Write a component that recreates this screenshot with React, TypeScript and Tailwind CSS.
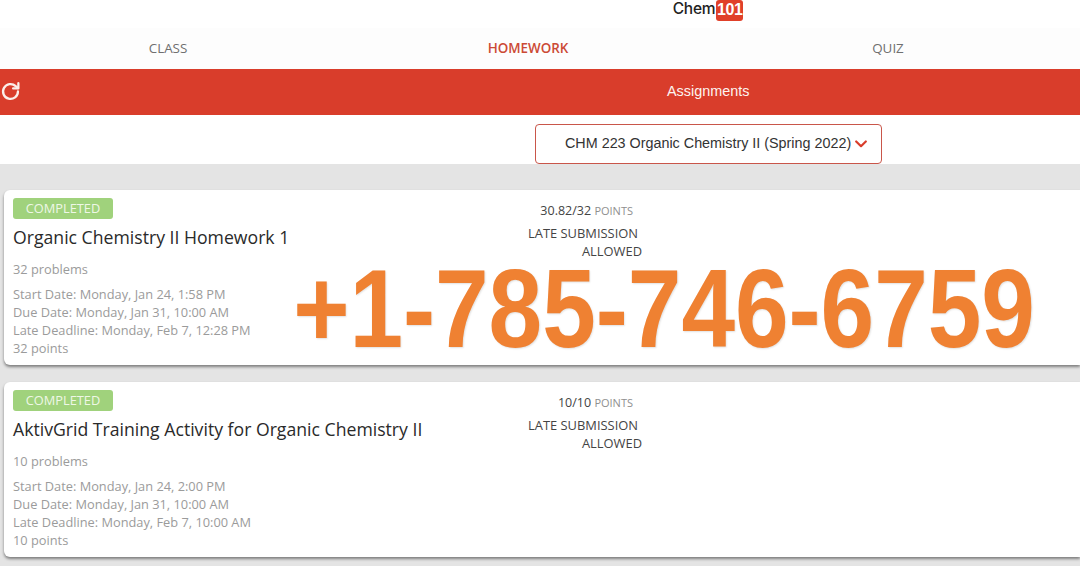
import React from "react";

const sans = "font-['Open_Sans','Noto_Sans',sans-serif]";

function Logo() {
  return (
    <div className="h-[28px] flex justify-center pl-[336px] bg-white">
      <div className="flex items-start h-[21px]">
        <span className="font-['Inter',sans-serif] text-[15.5px] leading-[18px] font-medium tracking-[-0.25px] text-[#222222]">Chem</span>
        <span className="font-['Liberation_Sans',sans-serif] font-bold text-[16px] tracking-[-0.4px] leading-[20px] h-[21px] w-[27px] ml-[1px] text-center rounded-[3px] bg-[#e04029] text-white">101</span>
      </div>
    </div>
  );
}

function Tabs() {
  return (
    <div className={`${sans} h-[41px] bg-[#fdfdfd] text-[13.4px] text-[#6f6f6f]`}>
      <div className="w-[1080px] h-full -ml-[12px] grid grid-cols-3">
        <div className="flex items-center justify-center">CLASS</div>
        <div className="flex items-center justify-center font-semibold text-[#cc4a35]">HOMEWORK</div>
        <div className="flex items-center justify-center">QUIZ</div>
      </div>
    </div>
  );
}

function RedBar() {
  return (
    <div className="h-[46px] bg-[#d93d2b] flex items-center">
      <svg className="mb-[1px] shrink-0" width="21" height="21" viewBox="0 0 24 24" fill="none" stroke="#fbeee9" strokeWidth="2.6" strokeLinecap="round" strokeLinejoin="round">
        <path d="M20.5 12a8.5 8.5 0 1 1-2.6-6.1L20.5 8" />
        <path d="M21 2.5V8.5h-6" />
      </svg>
      <div className="pl-[646px] font-['Liberation_Sans',sans-serif] text-[14.4px] text-[#fdf3f0]">Assignments</div>
    </div>
  );
}

function Selector() {
  return (
    <div className="h-[49px] bg-white pt-[9px] pl-[535px]">
      <div className="w-[347px] h-[40px] border border-[#c9564a] rounded-[4px] flex items-center pl-[29px] pb-[1px] font-['Liberation_Sans',sans-serif] text-[14.35px] text-[#333333] whitespace-nowrap">
        <span>CHM 223 Organic Chemistry II (Spring 2022)</span>
        <svg className="ml-[4px] mt-[1px]" width="12" height="8" viewBox="0 0 12 8" fill="none" stroke="#d93d2b" strokeWidth="2.2" strokeLinecap="round" strokeLinejoin="round">
          <path d="M1.2 1.5 6 6.2l4.8-4.7" />
        </svg>
      </div>
    </div>
  );
}

type CardProps = {
  title: string;
  score: string;
  problems: string;
  start: string;
  due: string;
  late: string;
  points: string;
};

function Card({ title, score, problems, start, due, late, points }: CardProps) {
  return (
    <div className={`${sans} h-[175px] ml-[4px] bg-white rounded-l-[6px] shadow-[0_2px_3px_rgba(0,0,0,0.45)] flex`}>
      <div className="w-[500px] pl-[9px] pt-[8px]">
        <div className="w-[100px] h-[21px] rounded-[3px] bg-[#a0d27c] text-[#eef7e6] text-[12.8px] leading-[21px] text-center">COMPLETED</div>
        <div className="mt-[6px] text-[17.65px] leading-[25px] text-[#2a2a2a] whitespace-nowrap">{title}</div>
        <div className="mt-[10px] text-[12.8px] leading-[18px] text-[#9b9b9b]">{problems}</div>
        <div className="mt-[7px] text-[12.8px] leading-[18px] text-[#9b9b9b]">
          <div>{start}</div>
          <div>{due}</div>
          <div>{late}</div>
          <div>{points}</div>
        </div>
      </div>
      <div className="w-[138px] pt-[12px] text-[#444444] text-right whitespace-nowrap">
        <div className="text-[12.5px] leading-[18px] pr-[9px]">
          {score} <span className="text-[11px] text-[#8f8f8f]">POINTS</span>
        </div>
        <div className="mt-[4px] text-[12.9px] leading-[18px]">
          <div className="pr-[4px]">LATE SUBMISSION</div>
          <div>ALLOWED</div>
        </div>
      </div>
    </div>
  );
}

export default function App() {
  return (
    <div className="w-[1080px] h-[566px] overflow-hidden relative bg-[#e4e4e4]">
      <Logo />
      <Tabs />
      <RedBar />
      <Selector />
      <div className="pt-[26px] flex flex-col gap-[17px]">
        <Card
          title="Organic Chemistry II Homework 1"
          score="30.82/32"
          problems="32 problems"
          start="Start Date: Monday, Jan 24, 1:58 PM"
          due="Due Date: Monday, Jan 31, 10:00 AM"
          late="Late Deadline: Monday, Feb 7, 12:28 PM"
          points="32 points"
        />
        <Card
          title="AktivGrid Training Activity for Organic Chemistry II"
          score="10/10"
          problems="10 problems"
          start="Start Date: Monday, Jan 24, 2:00 PM"
          due="Due Date: Monday, Jan 31, 10:00 AM"
          late="Late Deadline: Monday, Feb 7, 10:00 AM"
          points="10 points"
        />
      </div>
      <div className="absolute left-[293px] top-[264px] w-[742px] origin-center scale-x-[0.86] font-['Liberation_Sans',sans-serif] font-bold text-[112px] leading-[90px] whitespace-nowrap text-[#ef8132] [text-shadow:1px_1px_2px_rgba(0,0,0,0.12)] flex justify-center">
        +1-785-746-6759
      </div>
    </div>
  );
}
